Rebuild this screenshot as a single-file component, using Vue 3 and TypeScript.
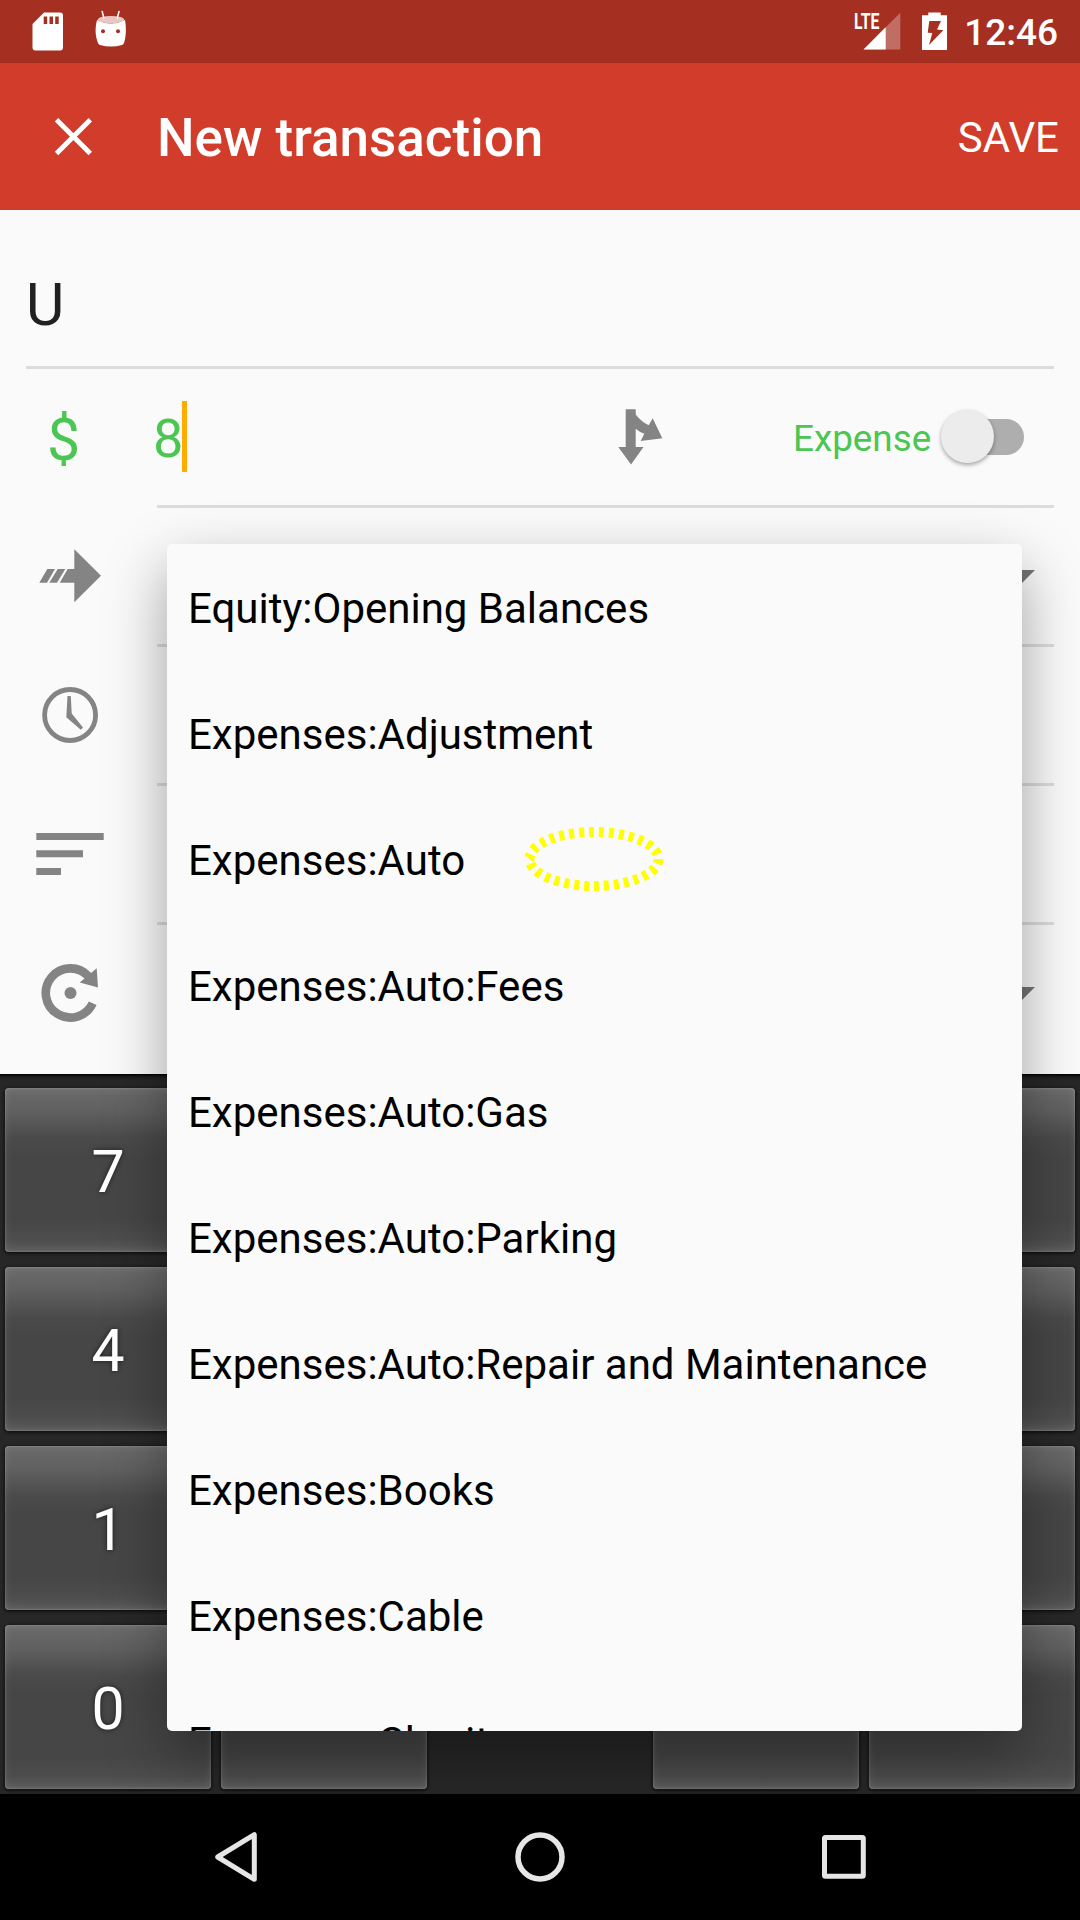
<script setup lang="ts">
const accounts: string[] = [
  'Equity:Opening Balances',
  'Expenses:Adjustment',
  'Expenses:Auto',
  'Expenses:Auto:Fees',
  'Expenses:Auto:Gas',
  'Expenses:Auto:Parking',
  'Expenses:Auto:Repair and Maintenance',
  'Expenses:Books',
  'Expenses:Cable',
  'Expenses:Charity',
]

// null leaves the grid cell empty, '' is a key without a label
const keys: (string | null)[] = [
  '7', '', '', '', '',
  '4', '', '', '', '',
  '1', '', '', '', '',
  '0', '', null, '', '',
]
</script>

<template>
  <div class="screen">
    <header class="status">
      <svg class="status-left" viewBox="0 0 140 63" width="140" height="63">
        <path
          fill="#fff"
          fill-rule="evenodd"
          d="M44 12.5H60a3 3 0 0 1 3 3V47.500a3 3 0 0 1-3 3H35.500a3 3 0 0 1-3-3V24ZM43.700 16.500V24H47.200V16.500ZM49.500 16.500V24H53V16.500ZM55.200 16.500V24H58.700V16.500Z"
        />
        <path fill="#fff" d="M97 20Q111 27 125 20C126.500 29 126 37 124 43Q123.500 44.500 122 45Q111 48 100 45Q98.500 44.500 98 43C95 35 95 28 97 20Z" />
        <ellipse cx="111" cy="19.700" rx="13.200" ry="3.700" fill="#e8c7c3" />
        <path d="M102.200 11.500L103.800 18M119 11.500L117.400 18" stroke="#fff" stroke-width="1.500" stroke-linecap="round" />
        <circle cx="103" cy="31.300" r="2" fill="#a53021" />
        <circle cx="118" cy="31.300" r="2" fill="#a53021" />
      </svg>
      <div class="status-right">
        <svg viewBox="850 0 104 63" width="104" height="63">
          <text class="lte" x="854" y="29" textLength="25.500" lengthAdjust="spacingAndGlyphs">LTE</text>
          <path d="M863.500 49.500L900.300 12.700V49.500Z" fill="#fff" fill-opacity=".3" />
          <path d="M863.500 49.500L885.700 27.300V49.500Z" fill="#fff" />
          <path
            fill="#fff"
            fill-rule="evenodd"
            d="M928.300 12.500H940.700V15.200H947V50H922V15.200H928.300ZM929.300 21L927.700 32.700L932.300 33L929 45L943.300 30.200L937 29.500L941 21Z"
          />
        </svg>
        <span class="time">12:46</span>
      </div>
    </header>

    <div class="toolbar">
      <svg class="close" viewBox="53 116 41 41" width="41" height="41">
        <path d="M56.500 119.700L90.300 153.500M90.300 119.700L56.500 153.500" stroke="#fff" stroke-width="4.800" />
      </svg>
      <h1>New transaction</h1>
      <span class="save">SAVE</span>
    </div>

    <main class="form">
      <div class="name">U</div>

      <div class="row">
        <div class="icon-cell currency">$</div>
        <div class="field">
          <span class="amount">8</span>
          <i class="caret"></i>
          <svg class="split" viewBox="616 407 50 60" width="50" height="60">
            <path
              fill="#848484"
              d="M625.700 409.300H635.700V414.500Q641 421.500 648.700 425.300L652.700 418.300L662.300 438.300L640.700 441L644.300 433.800Q639.500 432 635.700 428.700V447H643.500L631 464.500L618.300 447H625.700Z"
            />
          </svg>
          <span class="type">Expense</span>
          <span class="switch"><i class="track"></i><i class="thumb"></i></span>
        </div>
      </div>

      <div class="row">
        <svg class="icon-cell" viewBox="26 508 131 136">
          <g fill="#848484">
            <path d="M67.700 569H74.300V549.300L101 575.700L74.300 602.300V582.700H59.700Z" />
            <path d="M57.700 569H65.300L57 582.700H49.300Z" />
            <path d="M47.300 569H55L47 582.700H39.300Z" />
          </g>
        </svg>
        <div class="field"><i class="arrow"></i></div>
      </div>

      <div class="row">
        <svg class="icon-cell" viewBox="26 647 131 136">
          <circle cx="70.100" cy="715" r="25.500" fill="none" stroke="#848484" stroke-width="4.800" />
          <path fill="#848484" d="M67.500 696H70.800L71.700 713.500L83 727.500L80.800 729.700L66.300 717.200Z" />
        </svg>
        <div class="field"></div>
      </div>

      <div class="row">
        <svg class="icon-cell" viewBox="26 786 131 136">
          <path fill="#848484" d="M36.300 833H103.700V840H36.300ZM36.300 850.300H83V857.300H36.300ZM36.300 868H61V875H36.300Z" />
        </svg>
        <div class="field"></div>
      </div>

      <div class="row last">
        <svg class="icon-cell tall" viewBox="26 925 131 149">
          <path d="M92.700 1003.300A24.600 24.600 0 1 1 88.500 976.300" fill="none" stroke="#848484" stroke-width="8.600" />
          <path fill="#848484" d="M96.700 968.300L98 987.500L79.700 982.500Z" />
          <circle cx="70.500" cy="993" r="6" fill="#848484" />
        </svg>
        <div class="field"><i class="arrow"></i></div>
      </div>
    </main>

    <section class="keyboard">
      <div v-for="(key, i) in keys" :key="i" :class="{ key: key !== null }">{{ key }}</div>
    </section>

    <nav class="nav">
      <svg viewBox="0 1794 1080 126" width="1080" height="126" fill="none" stroke="#e6e6e6" stroke-width="5">
        <path d="M217.700 1857L254.300 1834.700V1879.300Z" stroke-linejoin="round" />
        <circle cx="540" cy="1857" r="22" stroke-width="5.500" />
        <rect x="824.500" y="1837.500" width="38.800" height="38.800" rx="1" />
      </svg>
    </nav>

    <div class="popup">
      <div v-for="account in accounts" :key="account" class="item">{{ account }}</div>
    </div>

    <svg class="marker" viewBox="0 0 140 66" width="140" height="66">
      <ellipse cx="70" cy="33" rx="64.500" ry="27" fill="none" stroke="#ff0" stroke-width="10" pathLength="300" stroke-dasharray="5 5" />
    </svg>
  </div>
</template>

<style>
body {
  margin: 0;
}
</style>

<style scoped>
.screen {
  position: relative;
  width: 1080px;
  height: 1920px;
  overflow: hidden;
  display: flex;
  flex-direction: column;
  background: #fafafa;
  font-family: Roboto, 'Liberation Sans', sans-serif;
}

svg {
  display: block;
}

.status {
  display: flex;
  justify-content: space-between;
  height: 63px;
  background: #a53021;
  color: #fff;
}

.status-right {
  display: flex;
  padding-right: 22px;
}

.lte {
  font-size: 22.500px;
  font-weight: 700;
  fill: #fff;
}

.time {
  width: 94px;
  margin-left: 10px;
  font-size: 37px;
  font-weight: 500;
  line-height: 66px;
  text-align: right;
}

.toolbar {
  display: flex;
  align-items: center;
  height: 147px;
  padding: 0 21px 0 53px;
  background: #d13d2a;
  color: #fff;
}

.close {
  flex: none;
}

h1 {
  flex: 1;
  margin: 3px 0 0 63px;
  font-size: 53px;
  font-weight: 500;
  line-height: 62px;
}

.save {
  margin-top: 2px;
  font-size: 42px;
  line-height: 50px;
}

.form {
  height: 864px;
  padding: 0 26px;
}

.name {
  box-sizing: border-box;
  height: 159px;
  padding-top: 16px;
  border-bottom: 3px solid #dcdcdc;
  font-size: 59px;
  line-height: 158px;
  color: #212121;
}

.row {
  display: flex;
  height: 139px;
}

.icon-cell {
  flex: none;
  width: 131px;
  height: 136px;
}

.icon-cell.tall {
  height: 149px;
}

.currency {
  box-sizing: border-box;
  padding-left: 21px;
  font-size: 59px;
  line-height: 142px;
  color: #4bc653;
}

.field {
  flex: 1;
  box-sizing: border-box;
  display: flex;
  align-items: center;
  border-bottom: 3px solid #dcdcdc;
}

.last,
.last .field {
  height: 149px;
  border-bottom: 0;
}

.amount {
  width: 28px;
  margin: 3px 0 0 -4px;
  font-size: 54px;
  line-height: 64px;
  color: #4bc653;
}

.caret {
  width: 5px;
  height: 71px;
  margin: -2px 0 0 1px;
  background: #ffab00;
}

.split {
  margin-top: -1px;
  margin-left: 429px;
}

.type {
  width: 140px;
  margin: 4px 0 0 127px;
  font-size: 36.800px;
  line-height: 44px;
  color: #4bc653;
}

.switch {
  position: relative;
  width: 84px;
  height: 54px;
  margin-left: 7px;
}

.track {
  position: absolute;
  top: 9px;
  left: 16px;
  width: 68px;
  height: 36px;
  border-radius: 18px;
  background: #aeaeae;
}

.thumb {
  position: absolute;
  top: 0;
  left: 1px;
  width: 53px;
  height: 53px;
  border-radius: 50%;
  background: #ececec;
  box-shadow: 0 2px 4px rgba(0, 0, 0, 0.35);
}

.arrow {
  margin: 3px 19px 0 auto;
  border: 15px solid transparent;
  border-top-color: #757575;
  border-bottom: 0;
}

.last .arrow {
  margin-top: -11px;
}

.keyboard {
  flex: none;
  box-sizing: border-box;
  display: grid;
  grid-template-columns: repeat(5, 206px);
  grid-auto-rows: 164px;
  gap: 15px 10px;
  height: 720px;
  padding: 14px 5px 5px;
  background: linear-gradient(#000, #1c1c1c 3px, #272727 7px);
}

.key {
  border-radius: 4px;
  background: linear-gradient(#6b6b6b, #606060 14%, #4a4a4a 31%, #464646 42%, #464646 80%, #4d4d4d 92%, #5a5a5a);
  box-shadow:
    0 1px 3px 1px #111,
    inset 0 0 8px rgba(255, 255, 255, 0.12),
    inset 0 0 2px rgba(255, 255, 255, 0.35);
  color: #fff;
  font-size: 59px;
  line-height: 167px;
  text-align: center;
  text-shadow: 0 0 5px rgba(0, 0, 0, 0.6);
}

.nav {
  height: 126px;
  background: #000;
}

.popup {
  position: absolute;
  top: 544px;
  left: 167px;
  width: 855px;
  height: 1187px;
  overflow: hidden;
  border-radius: 5px;
  background: #fafafa;
  box-shadow: 0 24px 60px rgba(0, 0, 0, 0.36);
}

.item {
  height: 126px;
  padding-left: 21px;
  font-size: 42px;
  line-height: 129px;
  color: #000;
  white-space: nowrap;
}

.marker {
  position: absolute;
  top: 826px;
  left: 524px;
}
</style>
